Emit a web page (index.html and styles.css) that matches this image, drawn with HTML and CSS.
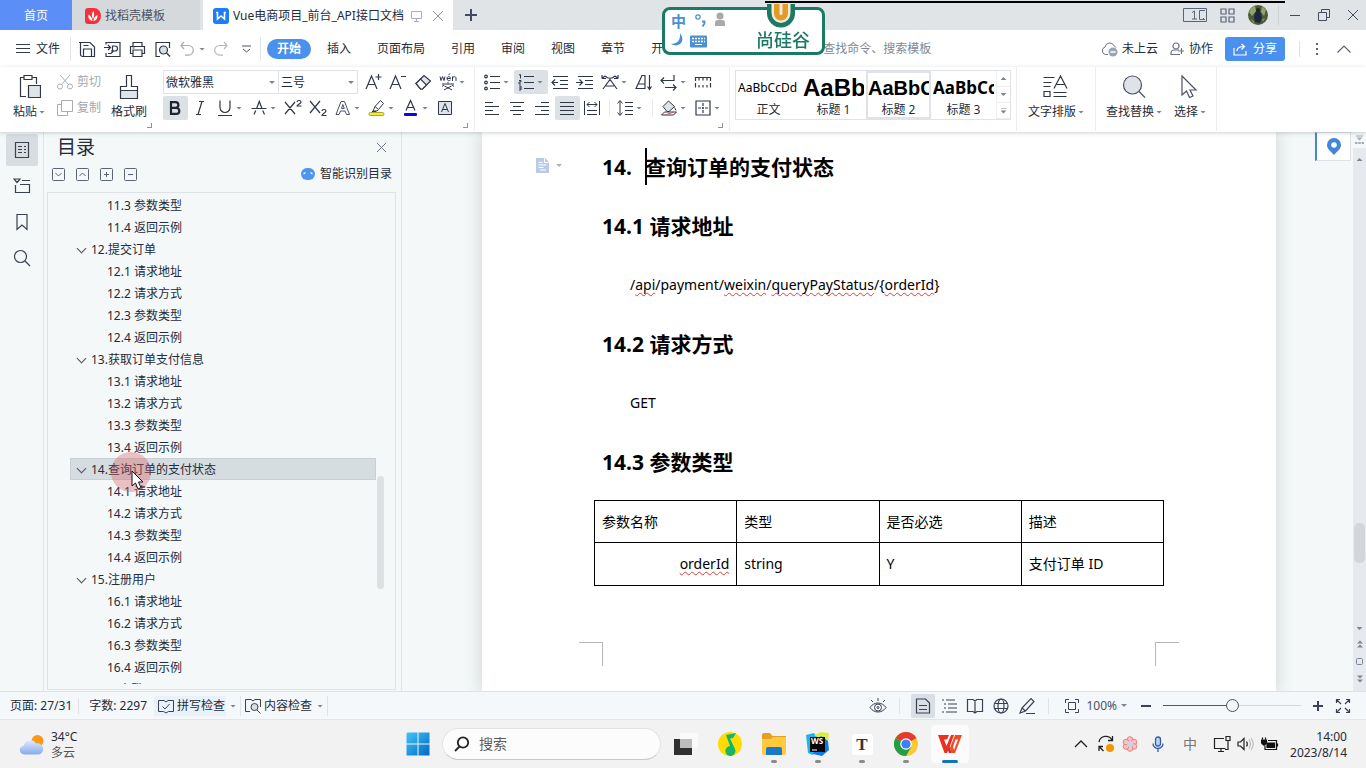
FILE: index.html
```html
<!DOCTYPE html>
<html lang="zh-CN">
<head>
    <meta charset="UTF-8">
    <meta name="viewport" content="width=device-width, initial-scale=1.0">
    <title>Vue电商项目_前台_API接口文档</title>
    <link rel="stylesheet" href="styles.css">
</head>
<body>
    <!-- Title bar -->
    <header class="titlebar">
        <button class="tab tab-home">首页</button>
        <button class="tab tab-docer">
            <svg width="16" height="16" viewBox="0 0 16 16"><path d="M3 0h6a7 8 0 0 1 0 16H3a3 3 0 0 1-3-3V3a3 3 0 0 1 3-3z" fill="#f5323c"/><path d="M7.500 13C3.500 12 3 9 3.500 6.500 6 8 7 10 7.500 13zM8 11C6 8 7 4.500 8.500 3c1 3 1 5.500-.500 8zM8.500 13c0-3 1.500-5 4-6 .3 3-1 5.500-4 6z" fill="#fff"/></svg>
            <span>找稻壳模板</span>
        </button>
        <div class="tab tab-active">
            <svg width="16" height="16" viewBox="0 0 16 16"><rect width="16" height="16" rx="3" fill="#1e7cf5"/><path d="M3 4.500h1.500V11L8 8l3.500 3V4.500H13" fill="none" stroke="#fff" stroke-width="1.600"/></svg>
            <span>Vue电商项目_前台_API接口文档</span>
            <svg class="tab-screen" width="11" height="12" viewBox="0 0 11 12" fill="none" stroke="#a9b0bd"><path d="M.5 1.500h10v7H.5zM5.500 8.500v3M3 11.500h5"/></svg>
            <button class="plain" aria-label="关闭标签"><svg width="12" height="12" viewBox="0 0 12 12" fill="none" stroke="#8d93a0"><path d="M1 1l10 10M11 1L1 11"/></svg></button>
        </div>
        <button class="plain tab-add" aria-label="新建"><svg width="12" height="12" viewBox="0 0 12 12" fill="none" stroke="#434b61" stroke-width="2"><path d="M6 0v12M0 6h12"/></svg></button>
        <div class="window-tools">
            <svg width="24" height="14" viewBox="0 0 24 14" fill="none" stroke="#5b6377"><path d="M.5.500h23v13H.5zM9 4.500l2.500-1.500v8M9 11h5M22 2.500h-5.500v9H22M20 10.500h1"/></svg>
            <svg width="15" height="15" viewBox="0 0 15 15" fill="none" stroke="#5b6377" stroke-width="1.200"><path d="M1 1h5v5H1zM9 1h5v5H9zM1 9h5v5H1zM9 9h5v5H9z"/></svg>
            <svg width="20" height="20" viewBox="0 0 20 20"><circle cx="10" cy="10" r="10" fill="#4c5a3a"/><path d="M1 7a9 9 0 0 1 6-6l1 5-4 5zM14 1l4 4-2 6-3-4z" fill="#93a56d"/><path d="M7 8l3-3 3 3 1 5-2 5-5-1-1-5z" fill="#1d2740"/><circle cx="10" cy="5" r="2" fill="#20201e"/><path d="M3 14l3 2 1 3-3-2zM14 14l3-1-2 4z" fill="#7c8d58"/></svg>
        </div>
        <div class="window-buttons">
            <button class="plain" aria-label="最小化"><svg width="12" height="12" viewBox="0 0 12 12" stroke="#444b5e"><path d="M1 6.500h10"/></svg></button>
            <button class="plain" aria-label="还原"><svg width="12" height="12" viewBox="0 0 12 12" fill="none" stroke="#444b5e"><path d="M.5 3.500h8v8h-8zM3.500 3.500v-3h8v8h-3"/></svg></button>
            <button class="plain" aria-label="关闭"><svg width="12" height="12" viewBox="0 0 12 12" stroke="#444b5e"><path d="M1 1l10 10M11 1L1 11"/></svg></button>
        </div>
    </header>

    <!-- Menu bar -->
    <nav class="menubar">
        <button class="menu-file">
            <svg width="14" height="12" viewBox="0 0 14 12" stroke="#333a4a"><path d="M0 1.500h14M0 5.500h14M0 9.500h14"/></svg>
            <span>文件</span>
        </button>
        <div class="quick">
            <button class="plain" aria-label="保存"><svg width="17" height="17" viewBox="0 0 17 17" fill="none" stroke="#2f3747" stroke-width="1.200"><path d="M0 1.500h11L15.500 6v9.500H3.500a2 2 0 0 1-2-2V1.500M4.500 15.500V8h8v7.500M4.500 4.500h5"/></svg></button>
            <button class="plain" aria-label="输出为PDF"><svg width="17" height="17" viewBox="0 0 17 17" fill="none" stroke="#2f3747" stroke-width="1.200"><path d="M2 3.500v-2h14v14H2V12M0 6.500h6M4 4l2.500 2.500L4 9M8.500 12V5h2.500a2.500 2.500 0 0 1 0 5H7M4 12.500h3l3-3"/></svg></button>
            <button class="plain" aria-label="打印"><svg width="17" height="17" viewBox="0 0 17 17" fill="none" stroke="#2f3747" stroke-width="1.200"><path d="M4 5V1.500h9V5M4 12.500H1.500v-7h14v7H13M4 9h9v6.500H4zM3.500 7h2"/></svg></button>
            <button class="plain" aria-label="打印预览"><svg width="17" height="17" viewBox="0 0 17 17" fill="none" stroke="#2f3747" stroke-width="1.200"><path d="M6 15.500H2v-14h13.500V7"/><circle cx="9.500" cy="9" r="4" fill="#d9dee4"/><path d="M12.500 12l3.500 3.500"/></svg></button>
            <button class="plain" aria-label="撤销"><svg width="16" height="16" viewBox="0 0 16 16" fill="none" stroke="#a8adb5" stroke-width="1.200"><path d="M5 1L2 4.500 5 8M2 4.500h7.500a4.800 4.800 0 0 1 0 9.600H6"/></svg><i class="caret"></i></button>
            <button class="plain" aria-label="恢复"><svg width="16" height="16" viewBox="0 0 16 16" fill="none" stroke="#b4b9c0" stroke-width="1.200"><path d="M11 1l3 3.500L11 8M14 4.500H6.500a4.800 4.800 0 0 0 0 9.600H10"/></svg></button>
            <button class="plain" aria-label="自定义快速访问"><svg width="9" height="8" viewBox="0 0 9 8" fill="none" stroke="#4b5262"><path d="M0 1h9M1 4l3.500 3L8 4"/></svg></button>
        </div>
        <div class="menus">
            <button class="menu active">开始</button>
            <button class="menu">插入</button>
            <button class="menu">页面布局</button>
            <button class="menu">引用</button>
            <button class="menu">审阅</button>
            <button class="menu">视图</button>
            <button class="menu">章节</button>
            <button class="menu">开发工具</button>
        </div>
        <input class="command-search" type="text" placeholder="查找命令、搜索模板" aria-label="查找命令">
        <div class="menu-right">
            <button class="plain cloud">
                <svg width="17" height="16" viewBox="0 0 17 16" fill="none" stroke="#6b7385"><path d="M7 13.500H4.500a3.800 3.800 0 0 1-.5-7.400A4.800 4.800 0 0 1 13.200 5 4 4 0 0 1 15 6.500"/><circle cx="12" cy="11" r="4.500" fill="#9aa3b8" stroke="none"/><path d="M9.500 11h5" stroke="#fff" stroke-width="1.500"/></svg>
                <span>未上云</span>
            </button>
            <button class="plain collab">
                <svg width="15" height="14" viewBox="0 0 15 14" fill="none" stroke="#6b7385" stroke-width="1.200"><circle cx="6" cy="4" r="3"/><path d="M9 8H4a3 3 0 0 0-3 3v1.500h9M11.500 6v6M8.500 9H14"/></svg>
                <span>协作</span>
            </button>
            <button class="share">
                <svg width="14" height="13" viewBox="0 0 14 13" fill="none" stroke="#fff" stroke-width="1.200"><path d="M1 5v7h12V8M4 8c0-3 2-4.500 7-4.500M8.500 1l3 2.500-3 3"/></svg>
                <span>分享</span>
            </button>
            <span class="divider"></span>
            <button class="plain more" aria-label="更多"><svg width="3" height="14" viewBox="0 0 3 14" fill="#5b6377"><path d="M0 1h2v2H0zM0 6h2v2H0zM0 11h2v2H0z"/></svg></button>
            <button class="plain" aria-label="折叠功能区"><svg width="14" height="8" viewBox="0 0 14 8" fill="none" stroke="#5b6377" stroke-width="1.200"><path d="M.5 7.500L7 1l6.500 6.500"/></svg></button>
        </div>
    </nav>

    <!-- Ribbon -->
    <section class="ribbon">
        <div class="group clipboard">
            <button class="big">
                <svg width="24" height="26" viewBox="0 0 24 26" fill="none" stroke="#2f3747" stroke-width="1.200"><path d="M9 22.500H3.500v-19H7M15 3.500h4.500V10M7 1.500h8v4H7z"/><path d="M11.500 11.500h12v12h-12z" fill="#dfe3ea"/></svg>
                <span>粘贴<i class="caret"></i></span>
            </button>
            <div class="stack">
                <button class="plain muted"><svg width="16" height="16" viewBox="0 0 16 16" fill="none" stroke="#a8adb5"><circle cx="3" cy="12.500" r="2.500"/><circle cx="13" cy="12.500" r="2.500"/><path d="M4.500 10.500L13 1M11.500 10.500L3 1"/></svg><span>剪切</span></button>
                <button class="plain muted"><svg width="16" height="16" viewBox="0 0 16 16" fill="none" stroke="#a8adb5"><path d="M4.500.5h11v11h-11zM4 4.500H.5v11h10V12"/></svg><span>复制</span></button>
            </div>
            <button class="big">
                <svg width="24" height="26" viewBox="0 0 24 26" fill="none" stroke="#2f3747" stroke-width="1.200"><path d="M3.500 16.500h17v8h-17z" fill="#dfe3ea"/><path d="M3.500 16.500v-4h6v-11h5v11h6v4"/></svg>
                <span>格式刷</span>
            </button>
            <i class="corner"></i>
        </div>

        <div class="group font">
            <div class="row">
                <div class="combo combo-name"><select aria-label="字体"><option>微软雅黑</option></select></div>
                <div class="combo combo-size"><select aria-label="字号"><option>三号</option></select></div>
                <button class="tool first" aria-label="增大字号"><svg width="18" height="18" viewBox="0 0 18 18" fill="none" stroke="#2f3747" stroke-width="1.200"><path d="M2 16L7.500 3 13 16M4 11.500h7M14.500 1v6M11.500 4h6"/></svg></button>
                <button class="tool" aria-label="减小字号"><svg width="18" height="18" viewBox="0 0 18 18" fill="none" stroke="#2f3747" stroke-width="1.200"><path d="M1 16L6.500 3 12 16M3 11.500h7M12 3.500h5"/></svg></button>
                <button class="tool" aria-label="清除格式"><svg width="18" height="18" viewBox="0 0 18 18" fill="#dfe3ea" stroke="#2f3747" stroke-width="1.200"><path d="M2 10.500L10 2.500l6.500 5.500-8 8H6.500z"/><path d="M2 10.500l4.500-4.500 6 6-4 4H6.500z" fill="#fff"/></svg></button>
                <button class="tool drop" aria-label="拼音指南"><svg width="18" height="18" viewBox="0 0 18 18" fill="none" stroke="#2f3747"><path d="M1 3.500l1 4 1.500-4 1.500 4 1-4M8 5.500h3.500c0-2.500-3.500-2.500-3.500 0s2.500 2.500 3.500 1.500M9.500 2L11 .5M13.500 8V3.500M13.500 5c1-2 3.500-1.500 3.500 0v3M9 9v1.500M3 11h12M5.500 13l7.500 4M12.500 13L5 17M5 12l-2 1.500M13 12l2 1.500"/></svg><i class="caret"></i></button>
            </div>
            <div class="row">
                <button class="tool on" aria-label="加粗"><svg width="18" height="18" viewBox="0 0 18 18" fill="none" stroke="#20242e" stroke-width="2.200"><path d="M5 3.100h4.500a2.800 2.800 0 0 1 0 5.800H5zM5 8.900h5.300a3 3 0 0 1 0 6H5zM5 2v14"/></svg></button>
                <button class="tool" aria-label="倾斜"><svg width="18" height="18" viewBox="0 0 18 18" fill="none" stroke="#2f3747" stroke-width="1.200"><path d="M8 2.500h5M5 15.500h5M11 2.500l-4 13"/></svg></button>
                <button class="tool drop" aria-label="下划线"><svg width="18" height="18" viewBox="0 0 18 18" fill="none" stroke="#2f3747" stroke-width="1.200"><path d="M4 1.500v7a5 5 0 0 0 10 0v-7M2 16.500h14"/></svg><i class="caret"></i></button>
                <button class="tool drop" aria-label="删除线"><svg width="18" height="18" viewBox="0 0 18 18" fill="none" stroke="#2f3747" stroke-width="1.200"><path d="M4 15.500l1.800-4M6.800 9L9.300 2.500 11.800 9M12.700 11.500l1.800 4M1.500 9.500h15"/></svg><i class="caret"></i></button>
                <button class="tool" aria-label="上标"><svg width="18" height="18" viewBox="0 0 18 18" fill="none" stroke="#2f3747" stroke-width="1.200"><path d="M1 3l10 12M11 3L1 15M13 3c0-2 4-2 4 0S13 5.500 13 7h4.500"/></svg></button>
                <button class="tool" aria-label="下标"><svg width="18" height="18" viewBox="0 0 18 18" fill="none" stroke="#2f3747" stroke-width="1.200"><path d="M1 2l10 12M11 2L1 14M13 12c0-2 4-2 4 0s-4 2.500-4 4.500h4.500"/></svg></button>
                <button class="tool drop" aria-label="文字效果"><svg width="18" height="18" viewBox="0 0 18 18" fill="none" stroke="#4b5262"><path d="M2 15.500L7 2.500h3.500l5 13h-3L11 12H6.500l-1.500 3.500zM7.500 9.500L8.800 5.500l1.500 4z"/></svg><i class="caret"></i></button>
                <button class="tool drop" aria-label="突出显示"><svg width="18" height="18" viewBox="0 0 18 18" fill="none" stroke="#2f3747"><path d="M7 7.500l5.500-6 3 3-5 6zM7 7.500L5 12h4l1.500-1.500M4 12.500h4" fill="#fff"/><rect x="1" y="13.500" width="15" height="3" rx="1.500" fill="#f6f01e" stroke="#a6a53a"/></svg><i class="caret"></i></button>
                <button class="tool drop" aria-label="字体颜色"><svg width="18" height="18" viewBox="0 0 18 18" fill="none" stroke="#2f3747" stroke-width="1.200"><path d="M4 11.500L8.500 1.500l4.500 10M5.500 8.500h6"/><rect x="2" y="14" width="13" height="3" rx="1" fill="#0a0ad8" stroke="none"/></svg><i class="caret"></i></button>
                <button class="tool" aria-label="字符底纹"><svg width="18" height="18" viewBox="0 0 18 18" fill="none" stroke="#2f3747"><path d="M2.500 2.500h13v13h-13z" fill="#dfe3ea"/><path d="M5.500 13L9 4.500l3.500 8.500M6.500 10.500h5"/></svg></button>
            </div>
            <i class="corner"></i>
        </div>

        <div class="group paragraph">
            <div class="row">
                <button class="tool drop" aria-label="项目符号"><svg width="18" height="18" viewBox="0 0 18 18" fill="none" stroke="#2f3747" stroke-width="1.200"><circle cx="3" cy="3.500" r="1.300"/><circle cx="3" cy="9.500" r="1.300"/><circle cx="3" cy="15.500" r="1.300"/><path d="M7 3.500h10M7 9.500h10M7 15.500h10"/></svg><i class="caret"></i></button>
                <button class="tool drop on" aria-label="编号"><svg width="18" height="18" viewBox="0 0 18 18" fill="none" stroke="#2f3747"><path d="M2 2l1.500-.500V5.500M2 7.500h2v1.500H2v2h2M2 13h2v4H2M2 15h2"/><path d="M7 3.500h10M7 9.500h10M7 15.500h10" stroke-width="1.200"/></svg><i class="caret"></i></button>
                <button class="tool" aria-label="减少缩进"><svg width="18" height="18" viewBox="0 0 18 18" fill="none" stroke="#2f3747" stroke-width="1.200"><path d="M2 3.500h15M9 7.500h8M9 11.500h8M2 15.500h15M1 9.500h6M4 6.500l-3 3 3 3"/></svg></button>
                <button class="tool" aria-label="增加缩进"><svg width="18" height="18" viewBox="0 0 18 18" fill="none" stroke="#2f3747" stroke-width="1.200"><path d="M2 3.500h15M9 7.500h8M9 11.500h8M2 15.500h15M0 9.500h6M3.500 6.500l3 3-3 3"/></svg></button>
                <button class="tool drop" aria-label="中文版式"><svg width="18" height="18" viewBox="0 0 18 18" fill="none" stroke="#2f3747" stroke-width="1.200"><path d="M1 5.500L4 3M1 5.500h4M1 5.500V2M17 5.500L14 3M17 5.500h-4M17 5.500V2M4 3c3 3 7 3 10 0M2 16l7-9.500 7 9.500M5 13h8"/></svg><i class="caret"></i></button>
                <button class="tool" aria-label="排序"><svg width="18" height="18" viewBox="0 0 18 18" fill="none" stroke="#2f3747" stroke-width="1.200"><path d="M1 15.500L7 2.500h3v13zM3.500 11H10M14.500 2v14M12.500 13.500l2 3 2-3"/></svg></button>
                <button class="tool drop" aria-label="换行标记"><svg width="18" height="18" viewBox="0 0 18 18" fill="none" stroke="#2f3747" stroke-width="1.200"><path d="M14 2v5.500H1M4 4.500l-3 3 3 3M5 14.500h11M13 11.500l3 3-3 3"/></svg><i class="caret"></i></button>
                <button class="tool" aria-label="标尺"><svg width="18" height="18" viewBox="0 0 18 18" fill="none" stroke="#2f3747" stroke-width="1.200"><path d="M1.500 8V4.500h15V8M5 4.500v3M9 4.500v3M13 4.500v3M1.500 10v4.500M5 12v2.500M9 12v2.500M13 12v2.500M16.500 10v4.500"/></svg></button>
            </div>
            <div class="row">
                <button class="tool" aria-label="左对齐"><svg width="18" height="18" viewBox="0 0 18 18" stroke="#2f3747"><path d="M2 3.500h8M2 7.500h14M2 11.500h8M2 15.500h14"/></svg></button>
                <button class="tool" aria-label="居中"><svg width="18" height="18" viewBox="0 0 18 18" stroke="#2f3747"><path d="M2 3.500h14M5 7.500h8M2 11.500h14M5 15.500h8"/></svg></button>
                <button class="tool" aria-label="右对齐"><svg width="18" height="18" viewBox="0 0 18 18" stroke="#2f3747"><path d="M8 3.500h8M2 7.500h14M8 11.500h8M2 15.500h14"/></svg></button>
                <button class="tool on" aria-label="两端对齐"><svg width="18" height="18" viewBox="0 0 18 18" stroke="#2f3747"><path d="M2 3.500h14M2 7.500h14M2 11.500h14M2 15.500h14"/></svg></button>
                <button class="tool" aria-label="分散对齐"><svg width="18" height="18" viewBox="0 0 18 18" fill="none" stroke="#2f3747"><path d="M1.500 2v14M16.500 2v14M4 5.500h10M6.500 3L4 5.500 6.500 8M11.500 3L14 5.500 11.500 8M4 11.500h10M4 15.500h10"/></svg></button>
                <span class="tool-divider"></span>
                <button class="tool drop" aria-label="行距"><svg width="18" height="18" viewBox="0 0 18 18" fill="none" stroke="#2f3747"><path d="M4 2v14M1.500 4.500L4 1.500l2.500 3M1.500 13.500l2.500 3 2.500-3M9 3.500h8M9 7.500h8M9 11.500h8M9 15.500h8"/></svg><i class="caret"></i></button>
                <span class="tool-divider wide"></span>
                <button class="tool drop" aria-label="底纹颜色"><svg width="18" height="18" viewBox="0 0 18 18" fill="none" stroke="#2f3747"><path d="M3 7.500L8.500 2l6 5.500-5.500 5H7z" fill="#dfe3ea"/><path d="M14.500 8.500l1.500 3"/><path d="M1.500 16l3-3h12l-3 3z" fill="#fff"/><path d="M5 16l9-3" stroke="#e05656"/></svg><i class="caret"></i></button>
                <button class="tool drop" aria-label="边框"><svg width="18" height="18" viewBox="0 0 18 18" fill="none" stroke="#2f3747" stroke-width="1.200"><path d="M2 2h14v14H2z"/><path d="M9 4v10M4 9h10" stroke-dasharray="3 1 2 1"/></svg><i class="caret"></i></button>
            </div>
            <i class="corner"></i>
        </div>

        <div class="group styles">
            <div class="gallery">
                <button class="style-card"><span class="sample sample-body">AaBbCcDd</span><span>正文</span></button>
                <button class="style-card"><span class="sample sample-h1">AaBb</span><span>标题 1</span></button>
                <button class="style-card selected"><span class="sample sample-h2">AaBbC</span><span>标题 2</span></button>
                <button class="style-card"><span class="sample sample-h3">AaBbCc</span><span>标题 3</span></button>
                <div class="gallery-scroll">
                    <button class="plain" aria-label="上一行"><i class="caret up"></i></button>
                    <button class="plain" aria-label="下一行"><i class="caret"></i></button>
                    <button class="plain" aria-label="更多样式"><i class="caret bar"></i></button>
                </div>
            </div>
        </div>

        <div class="group typeset">
            <button class="big">
                <svg width="26" height="26" viewBox="0 0 26 26" fill="none" stroke="#2f3747" stroke-width="1.200"><path d="M.5 3.500h11M.5 8.500h8M.5 12.500h7M1 17.500h6v5H1zM10.500 18.500h13M10.500 22.500h13M11 14.500L17.500 2 24 14.500M13.500 10.500h8"/></svg>
                <span>文字排版<i class="caret"></i></span>
            </button>
        </div>

        <div class="group find">
            <button class="big">
                <svg width="26" height="26" viewBox="0 0 26 26" fill="none" stroke="#4b5262" stroke-width="1.200"><circle cx="11.500" cy="11" r="9" fill="#dfe3e8"/><path d="M18 17.500l6 6"/></svg>
                <span>查找替换<i class="caret"></i></span>
            </button>
            <button class="big">
                <svg width="26" height="26" viewBox="0 0 26 26" fill="#fff" stroke="#4b5262" stroke-width="1.200"><path d="M5 2v19l4.500-4 3 6.500 3.500-1.500-3-6h6z"/></svg>
                <span>选择<i class="caret"></i></span>
            </button>
        </div>
    </section>

    <!-- Workspace -->
    <main class="workspace">
        <aside class="rail">
            <button class="rail-btn on" aria-label="目录"><svg width="18" height="18" viewBox="0 0 18 18" fill="none" stroke="#3a4152" stroke-width="1.200"><path d="M2.500 1.500h13v15h-13z"/><path d="M5 5.500h4M11 5.500h2M5 8.500h4M11 8.500h2M5 11.500h4M11 11.500h2"/></svg></button>
            <button class="rail-btn" aria-label="章节"><svg width="18" height="18" viewBox="0 0 18 18" fill="none" stroke="#3a4152" stroke-width="1.200"><path d="M1 2h6L4 5.500zM9 3.500h8M2.500 8v7.500h14v-8H7"/></svg></button>
            <button class="rail-btn" aria-label="书签"><svg width="18" height="18" viewBox="0 0 18 18" fill="none" stroke="#3a4152" stroke-width="1.200"><path d="M4 1.500h10v15l-5-4.500-5 4.500z"/></svg></button>
            <button class="rail-btn" aria-label="查找"><svg width="18" height="18" viewBox="0 0 18 18" fill="none" stroke="#3a4152" stroke-width="1.200"><circle cx="7.500" cy="7.500" r="6"/><path d="M12 12l5 5"/></svg></button>
        </aside>

        <aside class="outline">
            <div class="outline-head">
                <h1>目录</h1>
                <button class="plain" aria-label="关闭目录"><svg width="11" height="11" viewBox="0 0 11 11" stroke="#6b7385"><path d="M1 1l9 9M10 1l-9 9"/></svg></button>
            </div>
            <div class="outline-tools">
                <button class="plain" aria-label="展开"><svg width="13" height="13" viewBox="0 0 13 13" fill="none" stroke="#5b6377"><rect x=".5" y=".5" width="12" height="12" rx="1"/><path d="M3.500 5l3 3 3-3"/></svg></button>
                <button class="plain" aria-label="收起"><svg width="13" height="13" viewBox="0 0 13 13" fill="none" stroke="#5b6377"><rect x=".5" y=".5" width="12" height="12" rx="1"/><path d="M3.500 8l3-3 3 3"/></svg></button>
                <button class="plain" aria-label="增加级别"><svg width="13" height="13" viewBox="0 0 13 13" fill="none" stroke="#5b6377"><rect x=".5" y=".5" width="12" height="12" rx="1"/><path d="M4 6.500h5M6.500 4v5"/></svg></button>
                <button class="plain" aria-label="减少级别"><svg width="13" height="13" viewBox="0 0 13 13" fill="none" stroke="#5b6377"><rect x=".5" y=".5" width="12" height="12" rx="1"/><path d="M4 6.500h5"/></svg></button>
                <button class="plain smart"><svg width="14" height="12" viewBox="0 0 14 12"><rect width="14" height="12" rx="6" fill="#4e95ee"/><path d="M2.500 6l2-1.500M11.500 6l-2-1.500" fill="none" stroke="#fff" stroke-width="1.200"/></svg><span>智能识别目录</span></button>
            </div>
            <div class="tree-box">
                <ul class="tree">
                    <li class="sub"><a href="#">11.3 参数类型</a></li>
                    <li class="sub"><a href="#">11.4 返回示例</a></li>
                    <li><a href="#">12.提交订单</a></li>
                    <li class="sub"><a href="#">12.1 请求地址</a></li>
                    <li class="sub"><a href="#">12.2 请求方式</a></li>
                    <li class="sub"><a href="#">12.3 参数类型</a></li>
                    <li class="sub"><a href="#">12.4 返回示例</a></li>
                    <li><a href="#">13.获取订单支付信息</a></li>
                    <li class="sub"><a href="#">13.1 请求地址</a></li>
                    <li class="sub"><a href="#">13.2 请求方式</a></li>
                    <li class="sub"><a href="#">13.3 参数类型</a></li>
                    <li class="sub"><a href="#">13.4 返回示例</a></li>
                    <li class="current">
                        <a href="#">14.查询订单的支付状态</a>
                        <div class="pointer"><svg width="14" height="20" viewBox="0 0 14 20"><path d="M1 1v15l3.500-3 2.500 6 3-1.300L7.500 12H12z" fill="#fff" stroke="#111"/></svg></div>
                    </li>
                    <li class="sub"><a href="#">14.1 请求地址</a></li>
                    <li class="sub"><a href="#">14.2 请求方式</a></li>
                    <li class="sub"><a href="#">14.3 参数类型</a></li>
                    <li class="sub"><a href="#">14.4 返回示例</a></li>
                    <li><a href="#">15.注册用户</a></li>
                    <li class="sub"><a href="#">16.1 请求地址</a></li>
                    <li class="sub"><a href="#">16.2 请求方式</a></li>
                    <li class="sub"><a href="#">16.3 参数类型</a></li>
                    <li class="sub"><a href="#">16.4 返回示例</a></li>
                    <li class="sub"><a href="#">退出登录</a></li>
                </ul>
                <div class="tree-thumb"></div>
            </div>
        </aside>

        <div class="canvas">
            <article class="page">
                <h2>
                    <span class="para-mark"><svg width="13" height="15" viewBox="0 0 13 15"><path d="M0 0h9l4 4v11H0z" fill="#b9cbe6"/><path d="M8.500.500v4h4M2.500 4.500h4M2.500 7h8M2.500 9.500h5M4 12h6" fill="none" stroke="#fff"/></svg><i class="caret"></i></span>
                    <span class="num">14.</span><span class="text-cursor"></span>查询订单的支付状态
                </h2>
                <h2>14.1 请求地址</h2>
                <p>/<u>api</u>/payment/<u>weixin</u>/<u>queryPayStatus</u>/{<u>orderId</u>}</p>
                <h2>14.2 请求方式</h2>
                <p>GET</p>
                <h2>14.3 参数类型</h2>
                <table>
                    <tr><th>参数名称</th><th>类型</th><th>是否必选</th><th>描述</th></tr>
                    <tr><td class="right"><u>orderId</u></td><td>string</td><td>Y</td><td>支付订单 ID</td></tr>
                </table>
                <div class="crop-marks"><i class="mark-left"></i><i class="mark-right"></i></div>
            </article>
            <button class="locate" aria-label="定位"><svg width="14" height="17" viewBox="0 0 14 17"><path d="M7 0a7 7 0 0 1 7 7c0 4-4 6.500-7 10C4 13.500 0 11 0 7a7 7 0 0 1 7-7z" fill="#4385d6"/><circle cx="7" cy="7" r="2.800" fill="#fff"/></svg></button>
        </div>

        <div class="scrollbar">
            <svg class="ruler-toggle" viewBox="0 0 9 9" fill="#a6acb8"><path d="M1 0h7v1H1zM1.500 2h6L4.500 5zM0 6.500h2.500v2H0zM3.300 6.500h2.500v2H3.300zM6.600 6.500H9v2H6.600z"/></svg>
            <i class="caret up"></i>
            <div class="scroll-thumb"></div>
            <i class="caret"></i>
            <svg width="8" height="8" viewBox="0 0 8 8" fill="#7d8595"><path d="M1 3.500h6L4 .5zM1 7.500h6L4 4.500z"/></svg>
            <svg width="7" height="7" viewBox="0 0 7 7" fill="none" stroke="#7d8595"><rect x=".5" y=".5" width="6" height="6" rx="1"/></svg>
            <svg width="8" height="8" viewBox="0 0 8 8" fill="#7d8595"><path d="M1 .5h6l-3 3zM1 4.500h6l-3 3z"/></svg>
        </div>
    </main>

    <!-- Status bar -->
    <footer class="statusbar">
        <div class="status-left">
            <span class="status-text">页面: 27/31</span>
            <span class="status-text">字数: 2297</span>
            <button class="plain check spell"><svg width="16" height="16" viewBox="0 0 16 16" fill="none" stroke="#3a4152"><path d="M6 2.500H.5v11h5L8 15l2.500-1.500h5v-11H10L8 4 6 2.500M4.500 8.500l2.500 2.500 4.500-5"/></svg><span>拼写检查</span><i class="caret"></i></button>
            <button class="plain check"><svg width="16" height="16" viewBox="0 0 16 16" fill="none" stroke="#3a4152"><path d="M5 13.500H.5V1.500H6L8 3l2-1.500h5.500V9"/><circle cx="9.500" cy="9" r="3.500" fill="#d9dee4"/><path d="M12 12l3.500 3.500"/></svg><span>内容检查</span><i class="caret"></i></button>
        </div>
        <div class="status-right">
            <button class="view" aria-label="护眼模式"><svg width="18" height="18" viewBox="0 0 18 18" fill="none" stroke="#3a4152"><path d="M1 10.500c4-6 12-6 16 0-4 6-12 6-16 0zM9 4V1M4 5L2 3M14 5l2-2"/><circle cx="9" cy="10.500" r="3.500"/><circle cx="9" cy="10.500" r="1"/></svg></button>
            <span class="divider"></span>
            <button class="view on" aria-label="页面视图"><svg width="18" height="18" viewBox="0 0 18 18" fill="none" stroke="#3a4152" stroke-width="1.200"><path d="M2.500 2h9L15.500 6v10h-13zM5 8.500h8M5 12.500h8"/></svg></button>
            <button class="view" aria-label="大纲"><svg width="18" height="18" viewBox="0 0 18 18" fill="none" stroke="#3a4152" stroke-width="1.200"><path d="M2 3h2M6 3h9M4 7h2M8 7h9M4 11h2M8 11h9M2 15h2M6 15h11"/></svg></button>
            <button class="view" aria-label="阅读版式"><svg width="18" height="18" viewBox="0 0 18 18" fill="none" stroke="#3a4152" stroke-width="1.200"><path d="M1.500 2.500H7L9 4l2-1.500h5.500v12H11L9 16l-2-1.500H1.500zM9 4v12"/></svg></button>
            <button class="view" aria-label="Web版式"><svg width="18" height="18" viewBox="0 0 18 18" fill="none" stroke="#3a4152" stroke-width="1.200"><circle cx="9" cy="9" r="7"/><ellipse cx="9" cy="9" rx="3" ry="7"/><path d="M2.500 6.500h13M2.500 11.500h13"/></svg></button>
            <button class="view" aria-label="写作模式"><svg width="18" height="18" viewBox="0 0 18 18" fill="none" stroke="#3a4152" stroke-width="1.200"><path d="M4 11L13 1.500l3 3L7.500 14 2 16zM4 11l3.500 3M8 16.500h9"/></svg></button>
            <span class="divider"></span>
            <button class="view" aria-label="最佳显示比例"><svg width="16" height="16" viewBox="0 0 16 16" fill="none" stroke="#3a4152"><path d="M1.500 5V1.500H5M11 1.500h3.500V5M14.500 11v3.500H11M5 14.500H1.500V11M4.500 4.500h7v7h-7z"/></svg></button>
            <button class="plain zoom-value">100%<i class="caret"></i></button>
            <button class="plain" aria-label="缩小"><svg width="12" height="12" viewBox="0 0 12 12" stroke="#3a4160" stroke-width="2"><path d="M1 6h10"/></svg></button>
            <input class="zoom-range" type="range" min="0" max="100" value="50" aria-label="缩放">
            <button class="plain" aria-label="放大"><svg width="12" height="12" viewBox="0 0 12 12" stroke="#3a4160" stroke-width="2"><path d="M1 6h10M6 1v10"/></svg></button>
            <button class="plain fullscreen" aria-label="全屏"><svg width="16" height="16" viewBox="0 0 16 16" fill="none" stroke="#3a4152" stroke-width="1.200"><path d="M1.500 5V1.500H5M11 1.500h3.500V5M14.500 11v3.500H11M5 14.500H1.500V11M1.500 1.500L6 6M14.500 1.500L10 6M14.500 14.500L10 10M1.500 14.500L6 10"/></svg></button>
        </div>
    </footer>

    <!-- Windows taskbar -->
    <div class="taskbar">
        <div class="weather">
            <svg width="26" height="24" viewBox="0 0 26 24"><defs><linearGradient id="cloud" x1="0" y1="0" x2="0" y2="1"><stop offset="0" stop-color="#dfeafd"/><stop offset="1" stop-color="#88aaea"/></linearGradient></defs><circle cx="18.500" cy="8" r="6" fill="#f79a1c"/><path d="M5.500 21.500a4.500 4.500 0 0 1-.5-9 6.500 6.500 0 0 1 12-2 5.500 5.500 0 0 1 3 11z" fill="url(#cloud)"/></svg>
            <div><strong>34°C</strong><span>多云</span></div>
        </div>
        <div class="apps">
            <button class="app start" aria-label="开始"><svg width="24" height="24" viewBox="0 0 24 24"><defs><linearGradient id="win" x1="0" y1="0" x2="1" y2="1"><stop offset="0" stop-color="#40c4f8"/><stop offset="1" stop-color="#0468c4"/></linearGradient></defs><path d="M1.500.500h10v11H.5v-10zM12.500.500h11v11h-11zM.5 12.500h11v11H.5zM12.500 12.500h11v11h-11z" fill="url(#win)"/></svg></button>
            <label class="search">
                <svg width="16" height="16" viewBox="0 0 16 16" fill="none" stroke="#222" stroke-width="1.800"><circle cx="9" cy="6.500" r="5.200"/><path d="M5.500 10.500L1 15"/></svg>
                <input type="text" placeholder="搜索" aria-label="搜索">
            </label>
            <button class="app" aria-label="任务视图"><svg width="24" height="24" viewBox="0 0 24 24"><rect x="6" y="1" width="18" height="15" fill="#fafafa"/><rect x="0" y="7" width="18" height="16" fill="#303030"/><rect x="6" y="7" width="12" height="9" fill="#bdbdbd"/></svg></button>
            <button class="app" aria-label="QQ音乐"><svg width="24" height="24" viewBox="0 0 24 24"><circle cx="12" cy="12" r="12" fill="#ffdc00"/><path d="M8 3l10-2-3 5-3 .5 5 10.500a5 5 0 1 1-5-3L8 3z" fill="#12b56a"/></svg></button>
            <button class="app running" aria-label="资源管理器"><svg width="24" height="24" viewBox="0 0 24 24"><path d="M0 3a2 2 0 0 1 2-2h6l2.500 3H24v7H0z" fill="#e3a021"/><path d="M0 7h9l2-2h13v16a2 2 0 0 1-2 2H2a2 2 0 0 1-2-2z" fill="#ffcb3d"/><path d="M4 23v-6a2 2 0 0 1 2-2h12a2 2 0 0 1 2 2v6z" fill="#1b78c8"/></svg></button>
            <button class="app running" aria-label="WebStorm"><svg width="24" height="24" viewBox="0 0 24 24"><path d="M0 3l8-2 4 5-5 17-5-2z" fill="#18b7f0"/><path d="M8 3l7-3 8 1-1 8-8-2z" fill="#d9ee42"/><path d="M15 4l7 5 1 9-7 6-9-2 3-12z" fill="#0c7bea"/><path d="M4 5h15v15H4z" fill="#050505"/><path d="M6 18h5" stroke="#fff"/><text x="5" y="12" class="ws-text">WS</text></svg></button>
            <button class="app running" aria-label="Typora"><span class="typora">T</span></button>
            <button class="app running" aria-label="Chrome"><svg width="24" height="24" viewBox="0 0 24 24"><circle cx="12" cy="12" r="12" fill="#fcc934"/><path d="M12 12L1.600 6A12 12 0 0 1 22.400 6z" fill="#e33b2e"/><path d="M12 12L1.600 6A12 12 0 0 0 12 24l5.200-9z" fill="#269c47"/><circle cx="12" cy="12" r="5.800" fill="#fff"/><circle cx="12" cy="12" r="4.600" fill="#3f7ff0"/></svg></button>
            <button class="app focused" aria-label="WPS"><svg width="24" height="24" viewBox="0 0 24 24"><path d="M0 3h11l-2 4.500H6l2.500 6.500L13 3h3l-5.500 15-1.500 3H6.500z" fill="#e8331f"/><path d="M12 3h12l-7 18h-3.500l-1.500-5 5-13z" fill="#f04a26"/><path d="M17.500 7.500h2.500l-4 10.500-1-3z" fill="#fff"/><path d="M11.500 14.500l2 6.500H11l-1-3z" fill="#d42a18"/></svg></button>
        </div>
        <div class="tray">
            <svg width="14" height="8" viewBox="0 0 14 8" fill="none" stroke="#222" stroke-width="1.300"><path d="M1 7l6-6 6 6"/></svg>
            <svg class="sync" width="18" height="18" viewBox="0 0 18 18" fill="none" stroke="#222" stroke-width="1.300"><path d="M2 7a7 7 0 0 1 13-2M15.500 1v4.500H11M2 16v-4.500h4M2.500 12l4 4"/><circle cx="13" cy="13" r="4" fill="#f79500" stroke="none"/></svg>
            <svg class="flower" width="16" height="16" viewBox="0 0 16 16" fill="#f9c3c1" stroke="#e88183"><circle cx="8" cy="3.500" r="2.800"/><circle cx="12" cy="6" r="2.800"/><circle cx="12" cy="10.500" r="2.800"/><circle cx="8" cy="12.500" r="2.800"/><circle cx="4" cy="10.500" r="2.800"/><circle cx="4" cy="6" r="2.800"/><circle cx="8" cy="8" r="3" fill="#ccd3e8" stroke="none"/></svg>
            <svg class="mic" width="12" height="16" viewBox="0 0 12 16" fill="none" stroke="#2f5fae" stroke-width="1.300"><rect x="3.500" y="1" width="5" height="9" rx="2.500" fill="#b9d2f2"/><path d="M1 7.500a5 5 0 0 0 10 0M6 12.500V16"/></svg>
            <span class="ime">中</span>
            <svg class="net" width="18" height="18" viewBox="0 0 18 18" fill="none" stroke="#222" stroke-width="1.200"><path d="M11 3.500H1.500v10h11M5 16.500h6M8 13.500v3M13 1.500h4v4h-4zM15 5.500v9h-3"/></svg>
            <svg width="17" height="16" viewBox="0 0 17 16" fill="none" stroke="#222" stroke-width="1.200"><path d="M1 6v4h2.500L7 13.500v-11L3.500 6zM9.500 5.500c1 1.500 1 3.500 0 5"/><path d="M12 3.500c2 3 2 6 0 9M14 2c3 4 3 8 0 12" stroke="#bbb"/></svg>
            <svg class="battery" width="18" height="16" viewBox="0 0 18 16" fill="none" stroke="#111" stroke-width="1.200"><path d="M7 4.500h8.500v9H4V9.500"/><path d="M6 7h7.500v4.500H6z" fill="#111"/><path d="M16.500 7.500v3M1.500 1.500v2M4.500 1.500v2"/><path d="M.5 4h5v2a2.500 2.500 0 0 1-5 0zM3 8v2" fill="#111"/></svg>
            <div class="clock"><span>14:00</span><span>2023/8/14</span></div>
        </div>
    </div>

    <!-- Recording overlay: input method bar with the brand mark -->
    <div class="record-line"></div>
    <div class="ime-bar">
        <span class="ime-lang">中</span>
        <svg class="ime-icons" width="62" height="40" viewBox="0 0 62 40"><circle cx="27" cy="7" r="2.200" fill="none" stroke="#4a90d2" stroke-width="1.200"/><path d="M31 11.500h2.500v2L31.500 16.500" fill="none" stroke="#4a90d2" stroke-width="1.800"/><circle cx="49" cy="6" r="3.500" fill="#a9a9a9"/><path d="M44 16v-3a3 3 0 0 1 3-3h4a3 3 0 0 1 3 3v3z" fill="#a9a9a9"/><path d="M9 23.500c6 6 0 15.500-9 10.500 7-.5 9.500-4 9-10.500z" fill="#4a8fd6"/><rect x="19" y="25.500" width="17" height="12" rx="1" fill="#4a90d2"/><path d="M21 28.500h13M21 31.500h13" stroke="#fff" stroke-width="1.500" stroke-dasharray="2 1"/><path d="M24 34.500h7" stroke="#fff"/></svg>
        <svg class="brand-mark" width="30" height="30" viewBox="0 0 30 30"><path d="M1 4h28v8a14 14.500 0 0 1-28 2z" fill="#1b7a63"/><path d="M5.500 4h19v9a9.500 10 0 0 1-19 0z" fill="#f1ead6"/><path d="M8 4h14v9.500a7 7 0 0 1-14 0z" fill="#e29a28"/><path d="M13.500 4h3v9.500a1.500 1.500 0 0 1-3 0z" fill="#f1ead6"/></svg>
        <span class="brand-name">尚硅谷</span>
    </div>
</body>
</html>
```
FILE: styles.css
```css
* {
    margin: 0;
    padding: 0;
    box-sizing: border-box;
}

body {
    height: 100vh;
    display: flex;
    flex-direction: column;
    overflow: hidden;
    font-family: "Noto Sans", "Noto Sans CJK SC", sans-serif;
    font-size: 12px;
    line-height: 16px;
    color: #252b38;
    background: #f4f8f9;
}

button,
input,
select {
    font: inherit;
    color: inherit;
    border: 0;
    background: none;
    outline: 0;
}

button {
    display: flex;
    align-items: center;
    justify-content: center;
    white-space: nowrap;
}

svg {
    display: block;
    flex: none;
}

.caret {
    flex: none;
    display: block;
    width: 6px;
    height: 3px;
    background: #7d8595;
    clip-path: polygon(0 0, 100% 0, 50% 100%);
}

.caret.up {
    clip-path: polygon(50% 0, 100% 100%, 0 100%);
}

.caret.bar {
    height: 6px;
    clip-path: polygon(0 0, 100% 0, 100% 1px, 0 1px, 0 3px, 100% 3px, 50% 100%, 0 3px);
}

.divider {
    width: 1px;
    height: 16px;
    background: #dfe3e8;
}

/* Title bar */
.titlebar {
    height: 30px;
    flex: none;
    display: flex;
    align-items: center;
    background: #e1e4e7;
}

.tab {
    height: 30px;
    display: flex;
    align-items: center;
    justify-content: flex-start;
    padding-top: 1px;
}

.tab-home {
    width: 72px;
    justify-content: center;
    color: #fff;
    background: #5c8ef7;
}

.tab-docer {
    width: 128px;
    padding-left: 13px;
    gap: 4px;
    color: #4b5262;
    background: #d5d9dc;
}

.tab-active {
    width: 250px;
    margin-left: 3px;
    padding-left: 10px;
    gap: 4px;
    background: #fff;
}

.tab-screen {
    margin-left: 3px;
}

.tab-active .plain {
    margin-left: 6px;
}

.tab-add {
    margin-left: 12px;
}

.window-tools {
    margin-left: auto;
    padding-right: 10px;
    display: flex;
    align-items: center;
    gap: 13px;
    border-right: 1px solid #cfd3d8;
}

.window-buttons {
    display: flex;
    gap: 17px;
    padding: 0 7px 0 10px;
}

/* Menu bar */
.menubar {
    height: 37px;
    flex: none;
    display: flex;
    align-items: center;
    padding-top: 1px;
    background: #fff;
}

.menu-file {
    height: 24px;
    padding: 0 10px 0 16px;
    gap: 6px;
    border-right: 1px solid #e2e5e9;
}

.quick {
    height: 24px;
    display: flex;
    align-items: center;
    gap: 8px;
    padding: 0 9px 0 8px;
    border-right: 1px solid #e2e5e9;
}

.quick .caret {
    margin-left: 4px;
}

.quick .plain:last-child {
    margin: 0 0 0 5px;
}

.menus {
    display: flex;
    margin-left: 6px;
}

.menu {
    height: 20px;
    padding: 0 13px;
}

.menu.active {
    margin-right: 3px;
    padding: 0 10px;
    color: #fff;
    font-weight: bold;
    background: #4a90ee;
    border-radius: 10px;
}

.command-search {
    width: 120px;
    margin-left: 111px;
}

.command-search::placeholder {
    color: #7f8797;
    opacity: 1;
}

.menu-right {
    display: flex;
    align-items: center;
    margin-left: auto;
    padding-right: 15px;
}

.cloud,
.collab {
    gap: 4px;
    margin-right: 12px;
}

.share {
    width: 60px;
    height: 24px;
    gap: 6px;
    margin-right: 14px;
    color: #fff;
    background: #4a90ee;
    border-radius: 3px;
}

.more {
    margin: 0 18px 0 16px;
}

/* Ribbon */
.ribbon {
    position: relative;
    z-index: 2;
    height: 65px;
    flex: none;
    display: flex;
    background: #fff;
    box-shadow: 0 1px 4px rgba(60, 70, 80, 0.25);
}

.group {
    position: relative;
    display: flex;
    padding-top: 3px;
    height: 64px;
    border-right: 1px solid #eceef1;
}

.corner {
    position: absolute;
    right: 6px;
    bottom: 3px;
    width: 5px;
    height: 5px;
    border-right: 1px solid #8b92a0;
    border-bottom: 1px solid #8b92a0;
}

.big {
    height: 50px;
    flex-direction: column;
    justify-content: flex-end;
    gap: 4px;
}

.big span {
    display: flex;
    align-items: center;
    gap: 2px;
}

.clipboard {
    width: 158px;
    padding-left: 13px;
    border: 0;
}

.clipboard .big + .stack {
    margin: 0 10px 0 12px;
}

.stack {
    display: flex;
    flex-direction: column;
    gap: 2px;
}

.stack .plain {
    height: 24px;
    gap: 4px;
}

.muted {
    color: #a3a8b0;
}

.font,
.paragraph {
    flex-direction: column;
    gap: 2px;
}

.font {
    width: 317px;
    padding-left: 5px;
}

.paragraph {
    width: 255px;
    padding-left: 5px;
}

.row {
    display: flex;
    height: 24px;
}

.tool {
    width: 25px;
    height: 24px;
    padding-left: 3px;
    justify-content: flex-start;
}

.tool.drop {
    width: 34px;
    gap: 2px;
}

.tool.first {
    margin-left: 3px;
}

.tool.on {
    background: #dce1e6;
    border-radius: 2px;
}

.tool-divider {
    width: 1px;
    height: 18px;
    margin: 3px 3px 0 4px;
    background: #e6e9ec;
}

.tool-divider.wide {
    margin: 3px 4px 0 5px;
}

.combo {
    position: relative;
    height: 24px;
    border: 1px solid #dfe3e8;
}

.combo-name {
    width: 116px;
}

.combo-size {
    width: 79px;
    border-left: 0;
}

.combo select {
    width: 100%;
    height: 22px;
    padding: 1px 0 0 2px;
    appearance: none;
}

.combo::after {
    content: '';
    position: absolute;
    top: 10px;
    right: 3px;
    width: 6px;
    height: 3px;
    background: #7d8595;
    clip-path: polygon(0 0, 100% 0, 50% 100%);
    pointer-events: none;
}

.styles {
    padding: 3px 5px 0;
}

.gallery {
    display: flex;
    height: 50px;
    border: 1px solid #dfe3e8;
}

.style-card {
    width: 65px;
    height: 48px;
    flex-direction: column;
    justify-content: flex-end;
    padding: 0 2px 1px;
}

.style-card.selected {
    border: 2px solid #dfe3e8;
    padding: 0;
}

.style-card.selected span:last-child {
    margin-bottom: -1px;
}

.sample {
    width: 100%;
    height: 28px;
    line-height: 28px;
    overflow: hidden;
    color: #000;
    text-align: left;
    font-weight: bold;
}

.sample-body {
    font-size: 12px;
    font-weight: normal;
}

.sample-h1 {
    font-family: "Liberation Sans", sans-serif;
    font-size: 24px;
}

.sample-h2 {
    font-family: "Liberation Sans", sans-serif;
    font-size: 20px;
}

.sample-h3 {
    font-size: 17px;
}

.gallery-scroll {
    width: 14px;
    display: flex;
    flex-direction: column;
    border-left: 1px solid #eceef1;
}

.gallery-scroll .plain {
    flex: 1;
    border-bottom: 1px solid #eceef1;
}

.typeset,
.find {
    padding: 3px 11px 0;
}

.find {
    padding: 3px 10px 0;
    gap: 12px;
}

/* Workspace */
.workspace {
    flex: 1;
    min-height: 0;
    display: flex;
}

.rail {
    width: 44px;
    display: flex;
    flex-direction: column;
    align-items: center;
    gap: 4px;
    padding-top: 2px;
    border-right: 1px solid #e0e5e8;
}

.rail-btn {
    width: 32px;
    height: 32px;
}

.rail-btn.on {
    background: #d7dde1;
    border-radius: 2px;
}

.outline {
    width: 358px;
    flex: none;
    display: flex;
    flex-direction: column;
    padding: 0 5px 1px 3px;
    border-right: 1px solid #e0e5e8;
}

.outline-head {
    height: 30px;
    flex: none;
    display: flex;
    align-items: center;
    justify-content: space-between;
    padding: 0 9px 0 10px;
}

.outline-head h1 {
    font-size: 19px;
    line-height: 30px;
    font-weight: normal;
}

.outline-tools {
    height: 30px;
    flex: none;
    display: flex;
    align-items: center;
    gap: 11px;
    padding: 0 4px 6px 5px;
}

.smart {
    margin-left: auto;
    gap: 5px;
}

.tree-box {
    position: relative;
    flex: 1;
    min-height: 0;
    padding: 1px 19px 5px 22px;
    display: flex;
    border: 1px solid #dde3e6;
}

.tree {
    flex: 1;
    overflow: hidden;
    list-style: none;
}

.tree li {
    position: relative;
    height: 22px;
    padding-left: 21px;
    line-height: 24px;
}

.tree li::before {
    content: '';
    position: absolute;
    left: 8px;
    top: 7px;
    width: 6px;
    height: 6px;
    border: solid #4b5262;
    border-width: 0 1px 1px 0;
    transform: rotate(45deg);
}

.tree li.sub {
    padding-left: 37px;
}

.tree li.sub::before {
    display: none;
}

.tree a {
    color: inherit;
    text-decoration: none;
}

.tree li.current {
    z-index: 1;
    background: #d6dde1;
    box-shadow: inset 0 0 0 1px #c9d0d5;
}

.pointer {
    position: absolute;
    left: 41px;
    top: -6px;
    width: 40px;
    height: 40px;
    padding: 18px 0 0 20px;
    border-radius: 50%;
    background: rgba(214, 90, 95, 0.35);
}

.tree-thumb {
    position: absolute;
    right: 11px;
    top: 283px;
    width: 7px;
    height: 113px;
    border-radius: 4px;
    background: #dde1e3;
}

.canvas {
    position: relative;
    flex: 1;
    min-width: 0;
    display: flex;
    justify-content: center;
    padding: 0 77px 0 80px;
    overflow: hidden;
}

.page {
    width: 100%;
    max-width: 794px;
    padding: 6px 113px 0 120px;
    color: #000;
    background: #fff;
    box-shadow: 0 0 16px 2px #d3d8d9;
}

.page h2 {
    position: relative;
    height: 59px;
    font-size: 21px;
    line-height: 59px;
    font-weight: bold;
}

.page p {
    height: 59px;
    padding-left: 28px;
    font-size: 14px;
    line-height: 58px;
}

.page u {
    text-decoration: underline wavy #d8403c 1px;
    text-underline-offset: 2px;
    text-decoration-skip-ink: none;
}

.num {
    display: inline-block;
    width: 43px;
}

.para-mark {
    position: absolute;
    left: -66px;
    top: 20px;
    display: flex;
    align-items: center;
    gap: 7px;
}

.para-mark .caret {
    background: #b0b4bb;
}

.text-cursor {
    position: absolute;
    top: 10px;
    width: 2px;
    height: 37px;
    background: #000;
}

.page table {
    width: 570px;
    max-width: none;
    margin: 8px 0 0 -8px;
    table-layout: fixed;
    border-collapse: collapse;
    font-size: 14px;
}

.page th,
.page td {
    height: 42px;
    padding: 0 7px;
    border: 1px solid #000;
    font-weight: normal;
    text-align: left;
}

.page td {
    height: 43px;
}

.page td.right {
    text-align: right;
}

.crop-marks {
    display: flex;
    justify-content: space-between;
    margin: 56px -16px 0 -23px;
}

.crop-marks i {
    width: 24px;
    height: 24px;
    border-top: 1px solid #b4b8bb;
}

.crop-marks .mark-left {
    border-right: 1px solid #b4b8bb;
}

.crop-marks .mark-right {
    border-left: 1px solid #b4b8bb;
}

.locate {
    position: absolute;
    right: 2px;
    top: 0;
    width: 36px;
    height: 29px;
    background: #fff;
    border: 1px solid #dfe3e8;
    border-left: 2px solid #4a86d0;
}

.scrollbar {
    width: 13px;
    display: flex;
    flex-direction: column;
    align-items: center;
    gap: 10px;
    padding-bottom: 8px;
    background: #e6eaee;
}

.ruler-toggle {
    width: 13px;
    height: 16px;
    padding: 3px 2px;
    background: #f4f8f9;
}

.scroll-thumb {
    width: 11px;
    height: 40px;
    margin: auto 0 54px;
    border-radius: 5px;
    background: #d3d7dc;
}

/* Status bar */
.statusbar {
    height: 29px;
    flex: none;
    display: flex;
    align-items: center;
    justify-content: space-between;
    background: #f4f8fa;
    border-top: 1px solid #dde2e5;
    border-bottom: 1px solid #e2e5e7;
}

.status-left,
.status-right {
    display: flex;
    align-items: center;
}

.status-left {
    padding-top: 1px;
}

.status-text {
    height: 16px;
    padding: 0 6px 0 10px;
    border-right: 1px solid #dfe3e8;
}

.status-text + .status-text {
    border: 0;
    padding-right: 7px;
}

.check {
    height: 20px;
    gap: 3px;
    padding: 0 4px;
    border-right: 1px solid #dfe3e8;
}

.check .caret {
    margin-left: 2px;
}

.check.spell {
    background: linear-gradient(90deg, #e9f2fb 72px, transparent 72px);
}

.status-right {
    padding-right: 15px;
}

.view {
    width: 24px;
    height: 24px;
    margin-right: 2px;
}

.view.on {
    background: #d9dfe4;
    border-radius: 2px;
}

.status-right .divider {
    margin: 0 11px 0 7px;
}

.zoom-value {
    gap: 4px;
    margin: 0 13px 0 0;
    color: #4b5262;
}

.zoom-range {
    width: 138px;
    height: 16px;
    margin: 0 11px;
    appearance: none;
    background: linear-gradient(90deg, #4a5870 50%, #d3d8dd 50%) center / 100% 1px no-repeat;
}

.zoom-range::-webkit-slider-thumb {
    appearance: none;
    width: 13px;
    height: 13px;
    border: 1px solid #4b5262;
    border-radius: 50%;
    background: #f4f4f4;
}

.fullscreen {
    margin-left: 11px;
}

/* Taskbar */
.taskbar {
    height: 48px;
    flex: none;
    display: grid;
    grid-template-columns: 1fr auto 1fr;
    align-items: center;
    background: #f2f2f2;
}

.weather {
    display: flex;
    align-items: center;
    gap: 6px;
    padding: 2px 0 0 19px;
}

.weather strong,
.weather span {
    display: block;
    font-weight: normal;
}

.weather span {
    color: #555;
}

.apps {
    display: flex;
    align-items: center;
}

.app {
    position: relative;
    width: 44px;
    height: 38px;
}

.app.start {
    padding-left: 3px;
}

.app.running::after,
.app.focused::after {
    content: '';
    position: absolute;
    bottom: 0;
    left: 19px;
    width: 6px;
    height: 3px;
    border-radius: 2px;
    background: #8b8b8b;
}

.app.focused {
    width: 38px;
    margin: 0 3px;
    background: #fbfbfb;
    border-radius: 4px;
}

.app.focused::after {
    left: 11px;
    width: 16px;
    background: #1172bd;
}

.search {
    width: 219px;
    height: 32px;
    display: flex;
    align-items: center;
    gap: 9px;
    margin: 0 3px 0 4px;
    padding: 0 11px;
    font-size: 14px;
    background: #fcfcfc;
    border: 1px solid #e3e3e3;
    border-bottom-color: #c9c9c9;
    border-radius: 16px;
}

.search input {
    width: 100%;
}

.search input::placeholder {
    color: #5d5d5d;
    opacity: 1;
}

.ws-text {
    font: bold 8px "Noto Sans", sans-serif;
    fill: #fff;
}

.typora {
    width: 21px;
    height: 21px;
    font: bold 17px/21px "Liberation Serif", serif;
    color: #333;
    background: #fff;
    border-radius: 3px;
}

.tray {
    display: flex;
    align-items: center;
    justify-content: flex-end;
    padding-right: 19px;
}

.sync {
    margin-left: 9px;
}

.flower {
    margin-left: 7px;
}

.mic {
    margin-left: 14px;
}

.ime {
    margin-left: 19px;
    font-size: 14px;
    color: #777;
}

.net {
    margin: 0 6px 0 16px;
}

.battery {
    margin-left: 7px;
}

.clock {
    width: 68px;
    padding-top: 1px;
    text-align: right;
}

.clock span {
    display: block;
}

/* Overlay drawn above the window */
.record-line {
    position: fixed;
    z-index: 3;
    top: 1px;
    left: 765px;
    width: 520px;
    height: 2px;
    background: #000;
}

.ime-bar {
    position: fixed;
    z-index: 4;
    top: 7px;
    left: 662px;
    width: 163px;
    height: 48px;
    background: #fff;
    border: 3px solid #1b7a63;
    border-radius: 8px;
}

.ime-lang {
    position: absolute;
    left: 6px;
    top: 3px;
    font-size: 15px;
    font-weight: bold;
    color: #4a90d2;
}

.ime-icons {
    position: absolute;
    left: 6px;
    top: 0;
}

.brand-mark {
    position: absolute;
    left: 101px;
    top: -10px;
}

.brand-name {
    position: absolute;
    left: 91px;
    top: 22px;
    font-size: 18px;
    font-weight: 500;
    color: #1b7a63;
}
```
